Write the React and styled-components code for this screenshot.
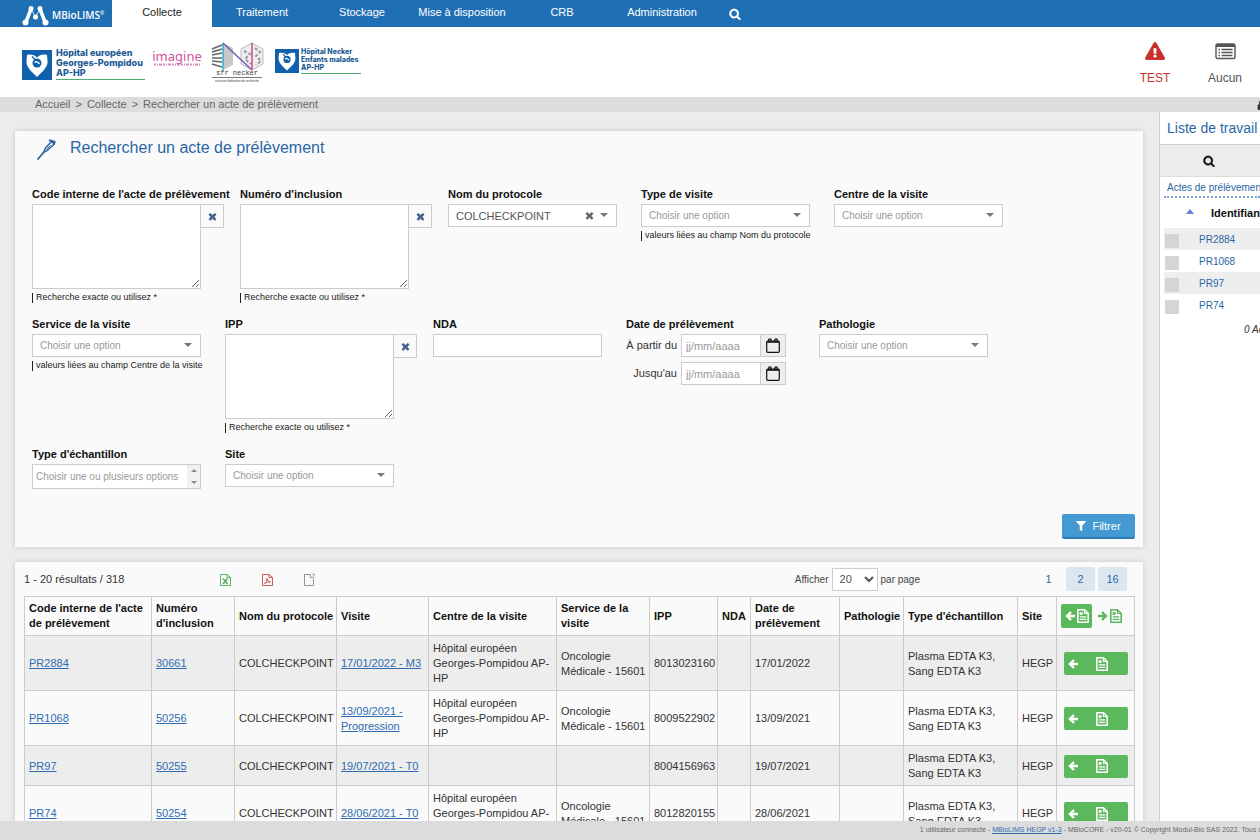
import React from 'react';
import styled, { createGlobalStyle, css } from 'styled-components';
import { FaFilter, FaExclamationTriangle, FaLock } from 'react-icons/fa';

const GlobalStyle = createGlobalStyle`
  * {
    box-sizing: border-box;
  }
  body {
    margin: 0;
    background: #ececec;
    color: #333;
    font-family: 'Liberation Sans', Arial, sans-serif;
    font-size: 11px;
    line-height: 15px;
  }
  button, input, select, textarea {
    font-family: inherit;
    font-size: 11px;
    margin: 0;
  }
  svg {
    display: block;
    flex-shrink: 0;
  }
`;

// Page frame
const Page = styled.div`
  display: flex;
  flex-direction: column;
  height: 100vh;
  overflow: hidden;
`;

const NavBar = styled.nav`
  display: flex;
  align-items: stretch;
  flex-shrink: 0;
  height: 27px;
  background: #1f6fb5;
`;

const Brand = styled.a`
  display: flex;
  align-items: center;
  gap: 3px;
  width: 112px;
  padding: 3px 0 0 22px;
  color: #fff;
  font-family: 'Open Sans', sans-serif;
  font-size: 10px;
  font-weight: 600;
  text-decoration: none;
`;

const BrandMark = styled.sup`
  font-size: 5px;
  line-height: 5px;
`;

const NavLink = styled.a`
  width: 100px;
  padding-top: 5px;
  text-align: center;
  text-decoration: none;
  color: ${(props) => (props.$active ? '#222' : '#fff')};
  background: ${(props) => (props.$active ? '#fff' : 'transparent')};
`;

const NavSearch = styled.button`
  display: flex;
  align-items: center;
  justify-content: center;
  width: 46px;
  padding: 0;
  border: none;
  background: none;
  color: #fff;
  cursor: pointer;
`;

const LogoBar = styled.header`
  display: flex;
  flex-shrink: 0;
  height: 70px;
  padding-left: 22px;
  background: #fff;
`;

const HospitalLogo = styled.div`
  display: flex;
  align-items: flex-start;
  gap: ${(props) => (props.$small ? '2px' : '4px')};
  margin-top: ${(props) => (props.$small ? '22px' : '23px')};
`;

const HospitalName = styled.div`
  min-width: ${(props) => (props.$small ? '60px' : '89px')};
  color: #1d5c96;
  border-bottom: 1px solid #4fae72;
  font-family: Inter, sans-serif;
  font-weight: 800;
  font-size: ${(props) => (props.$small ? '7px' : '9px')};
  line-height: ${(props) => (props.$small ? '8px' : '10px')};
  padding-bottom: 1px;
  margin-top: ${(props) => (props.$small ? '-1px' : '-2px')};
  white-space: nowrap;
`;

const ImagineLogo = styled.div`
  display: flex;
  flex-direction: column;
  align-items: center;
  width: 48px;
  margin: 22px 10px 0 8px;
  color: #d0509c;
  font-family: 'Noto Sans', sans-serif;
  font-size: 13px;
  line-height: 14px;
`;

const NeckerLogo = styled.div`
  margin: 15px 11px 0 0;
`;

const Shortcuts = styled.div`
  display: flex;
  margin-left: auto;
`;

const Shortcut = styled.a`
  display: flex;
  flex-direction: column;
  align-items: center;
  width: 70px;
  padding-top: 14px;
  gap: 10px;
  font-size: 12px;
  text-decoration: none;
  color: ${(props) => (props.$alert ? '#c9302c' : '#555')};
`;

const Breadcrumb = styled.div`
  display: flex;
  align-items: center;
  gap: 5px;
  flex-shrink: 0;
  height: 15px;
  padding-left: 35px;
  background: #dcdcdc;
  color: #666;
  overflow: hidden;
`;

const Crumb = styled.a`
  color: #666;
  text-decoration: none;
`;

const LockSlot = styled.span`
  margin: 0 -7px 0 auto;
  color: #333;
`;

const Main = styled.main`
  display: flex;
  flex: 1;
  min-height: 0;
  overflow: hidden;
`;

const Content = styled.div`
  display: flex;
  flex-direction: column;
  flex: 1;
  gap: 15px;
  min-width: 0;
  padding: 19px 16px 0 15px;
`;

const Panel = styled.section`
  flex-shrink: 0;
  background: #fafafa;
  box-shadow: 0 0 5px rgba(0, 0, 0, 0.16);
`;

// Search form
const SearchForm = styled.form`
  display: flex;
  flex-direction: column;
  padding: 0 8px 8px 17px;
`;

const PanelTitle = styled.h1`
  display: flex;
  align-items: flex-start;
  gap: 13px;
  height: 56px;
  margin: 0;
  padding: 7px 0 0 4px;
  color: #2a66a5;
  font-size: 16px;
  font-weight: normal;
  line-height: 20px;
`;

const Fields = styled.div`
  display: flex;
  flex-direction: column;
  gap: 12px;
`;

const FieldRow = styled.div`
  display: flex;
`;

const Field = styled.div`
  width: ${(props) => (props.$wide ? '208px' : '193px')};
`;

const Label = styled.label`
  display: block;
  margin-bottom: 2px;
  color: #111;
  font-weight: bold;
  white-space: nowrap;
`;

const Hint = styled.div`
  display: flex;
  align-items: center;
  gap: 3px;
  margin-top: 1px;
  color: #222;
  font-size: 9px;
  white-space: nowrap;
  &::before {
    content: '';
    width: 1px;
    height: 10px;
    background: #222;
  }
`;

const InputGroup = styled.div`
  display: flex;
  align-items: flex-start;
`;

const CodeArea = styled.textarea`
  display: block;
  width: 169px;
  height: 85px;
  border: 1px solid #ccc;
  background: #fff;
  resize: both;
  &:focus {
    outline: none;
    border-color: #66afe9;
  }
`;

const ClearArea = styled.button`
  display: flex;
  align-items: center;
  justify-content: center;
  width: 23px;
  height: 24px;
  padding: 0;
  border: 1px solid #ccc;
  border-left: none;
  background: #fafafa;
  color: #43618f;
  cursor: pointer;
`;

const TextInput = styled.input`
  display: block;
  width: 169px;
  height: 23px;
  border: 1px solid #ccc;
  background: #fff;
`;

const SelectBox = styled.div`
  position: relative;
  width: 169px;
`;

const Select = styled.select`
  display: block;
  width: 100%;
  height: ${(props) => (props.$multi ? '25px' : '23px')};
  padding: ${(props) => (props.$multi ? '0 3px' : '0 7px')};
  border: 1px solid #ccc;
  border-radius: 0;
  background: #fff;
  appearance: none;
  color: ${(props) => (props.$filled ? '#555' : '#999')};
  font-size: ${(props) => (props.$filled ? '11px' : '10px')};
`;

const Caret = styled.span`
  position: absolute;
  top: 9px;
  right: 9px;
  border: 4px solid transparent;
  border-top-color: #777;
  border-bottom: none;
  pointer-events: none;
`;

const ClearChoice = styled.button`
  position: absolute;
  top: 6px;
  right: 22px;
  padding: 0;
  border: none;
  background: none;
  color: #666;
  cursor: pointer;
`;

const ScrollArrows = styled.span`
  position: absolute;
  top: 1px;
  right: 1px;
  bottom: 1px;
  display: flex;
  flex-direction: column;
  align-items: center;
  justify-content: space-around;
  width: 13px;
  background: #f1f1f1;
  pointer-events: none;
`;

const ScrollArrow = styled.i`
  border: 3px solid transparent;
  ${(props) =>
    props.$up
      ? css`
          border-top: none;
          border-bottom-color: #888;
        `
      : css`
          border-bottom: none;
          border-top-color: #888;
        `}
`;

const DateLine = styled.div`
  display: flex;
  align-items: center;
  width: 160px;
  margin-bottom: 5px;
`;

const DateLabel = styled.label`
  flex: 1;
  margin-right: 4px;
  text-align: right;
  white-space: nowrap;
`;

const DateInput = styled.input`
  width: 80px;
  height: 23px;
  padding: 0 4px;
  border: 1px solid #ccc;
  background: #fff;
  &::placeholder {
    color: #999;
  }
`;

const DateButton = styled.button`
  display: flex;
  align-items: center;
  justify-content: center;
  width: 25px;
  height: 23px;
  padding: 0;
  border: 1px solid #ccc;
  border-left: none;
  background: #eee;
  color: #111;
`;

const FilterButton = styled.button`
  display: flex;
  align-items: center;
  justify-content: center;
  gap: 6px;
  align-self: flex-end;
  width: 73px;
  height: 25px;
  margin-top: 25px;
  padding: 0;
  border: none;
  border-bottom: 2px solid #2d7cb8;
  border-radius: 2px;
  background: #4499d2;
  color: #fff;
  cursor: pointer;
  &:hover {
    background: #3989c0;
  }
`;

// Results
const Results = styled.div`
  padding: 0 9px;
`;

const ResultsBar = styled.div`
  display: flex;
  align-items: center;
  height: 34px;
`;

const ResultsCount = styled.div`
  width: 196px;
`;

const Exports = styled.div`
  display: flex;
  gap: 31px;
`;

const ExportButton = styled.button`
  padding: 0;
  border: none;
  background: none;
  cursor: pointer;
  color: ${(props) => props.$color};
`;

const PageSize = styled.label`
  display: flex;
  align-items: center;
  gap: 3px;
  margin-left: auto;
  color: #444;
  font-size: 10px;
`;

const PageSizeSelect = styled.select`
  width: 46px;
  height: 23px;
  padding: 0 0 0 3px;
  border: 1px solid #ccc;
  background: #fff;
  color: #555;
`;

const Pager = styled.div`
  display: flex;
  gap: 3px;
  margin: 0 7px 0 114px;
`;

const PageLink = styled.a`
  width: 29px;
  height: 24px;
  border-radius: 2px;
  background: ${(props) => (props.$current ? 'transparent' : '#dce6f1')};
  color: #2a66a5;
  line-height: 24px;
  text-align: center;
  text-decoration: none;
`;

const Table = styled.table`
  width: 100%;
  border-collapse: collapse;
  table-layout: fixed;
`;

const Th = styled.th`
  padding: 4px 0 4px 4px;
  border: 1px solid #ccc;
  color: #111;
  text-align: left;
`;

const Td = styled.td`
  padding: 5px 0 4px 4px;
  border: 1px solid #ccc;
`;

const Tr = styled.tr`
  background: ${(props) => (props.$odd ? '#ededed' : '#fafafa')};
`;

const Link = styled.a`
  color: #2f6cb0;
  text-decoration: underline;
`;

const HeadActions = styled.div`
  display: flex;
  align-items: center;
  gap: 6px;
`;

const AddAll = styled.button`
  display: flex;
  align-items: center;
  justify-content: center;
  gap: 2px;
  width: 31px;
  height: 24px;
  padding: 0;
  border: none;
  border-radius: 2px;
  background: #5cb85c;
  color: #fff;
`;

const RemoveAll = styled.button`
  display: flex;
  align-items: center;
  gap: 2px;
  padding: 0;
  border: none;
  background: none;
  color: #5cb85c;
`;

const AddOne = styled.button`
  display: flex;
  align-items: center;
  justify-content: space-between;
  width: 64px;
  height: 23px;
  margin-left: 3px;
  padding: 0 20px 0 4px;
  border: none;
  border-radius: 2px;
  background: #5cb85c;
  color: #fff;
`;

// Work list
const Sidebar = styled.aside`
  flex-shrink: 0;
  width: 101px;
  border-left: 1px solid #ccc;
  background: #fff;
  overflow: hidden;
  white-space: nowrap;
`;

const SidebarTitle = styled.h2`
  height: 33px;
  margin: 0;
  padding-left: 7px;
  border-bottom: 1px solid #ccc;
  color: #2a66a5;
  font-size: 14px;
  font-weight: normal;
  line-height: 32px;
`;

const SidebarTools = styled.div`
  display: flex;
  align-items: center;
  height: 32px;
  padding-left: 43px;
  border-bottom: 1px solid #ddd;
  background: #ececec;
`;

const SidebarSearch = styled.button`
  padding: 0;
  border: none;
  background: none;
  color: #111;
`;

const SidebarTab = styled.a`
  display: block;
  height: 21px;
  margin-left: 4px;
  padding-left: 3px;
  border-bottom: 2px dotted #7ba0c9;
  color: #2a66a5;
  font-size: 10px;
  line-height: 21px;
  text-decoration: none;
`;

const WorkTable = styled.table`
  width: 160px;
  margin-left: 4px;
  border-collapse: collapse;
  table-layout: fixed;
`;

const WorkHead = styled.th`
  height: 30px;
  padding: 0 0 0 13px;
  color: #111;
  text-align: left;
`;

const SortArrow = styled.span`
  display: block;
  width: 0;
  margin: -4px 0 0 9px;
  border: 4px solid transparent;
  border-top: none;
  border-bottom: 5px solid #6a7fd0;
`;

const WorkRow = styled.tr`
  background: ${(props) => (props.$odd ? '#eee' : '#fff')};
`;

const WorkCell = styled.td`
  height: 22px;
  padding: 0 0 0 1px;
  font-size: 10px;
`;

const WorkLink = styled.a`
  color: #2a66a5;
  text-decoration: none;
`;

const WorkCheck = styled.input`
  display: block;
  width: 14px;
  height: 14px;
  margin-top: 4px;
  appearance: none;
  background: #d5d5d5;
`;

const WorkTotal = styled.p`
  margin: 4px 0 0 84px;
  font-size: 10px;
  font-style: italic;
  line-height: 20px;
`;

const Footer = styled.footer`
  flex-shrink: 0;
  height: 19px;
  padding-left: 73%;
  background: #dcdcdc;
  color: #666;
  font-size: 7px;
  line-height: 18px;
  white-space: nowrap;
  overflow: hidden;
`;

// Icons
const Glyph = ({ d, size }) => (
  <svg width={size} height={size} viewBox="0 0 1792 1792" fill="currentColor" stroke="currentColor" strokeWidth="50">
    <path d={d} />
  </svg>
);

const SearchIcon = () => (
  <Glyph
    size={12}
    d="M1216 832q0-185-131.5-316.5t-316.5-131.5-316.5 131.5-131.5 316.5 131.5 316.5 316.5 131.5 316.5-131.5 131.5-316.5zm512 832q0 52-38 90t-90 38q-54 0-90-38l-343-342q-179 124-399 124-143 0-273.5-55.5t-225-150-150-225-55.5-273.5 55.5-273.5 150-225 225-150 273.5-55.5 273.5 55.5 225 150 150 225 55.5 273.5q0 220-124 399l343 343q37 37 37 90z"
  />
);

const TimesIcon = () => (
  <Glyph
    size={11}
    d="M1490 1322q0 40-28 68l-136 136q-28 28-68 28t-68-28l-294-294-294 294q-28 28-68 28t-68-28l-136-136q-28-28-28-68t28-68l294-294-294-294q-28-28-28-68t28-68l136-136q28-28 68-28t68 28l294 294 294-294q28-28 68-28t68 28l136 136q28 28 28 68t-28 68l-294 294 294 294q28 28 28 68z"
  />
);

const ArrowIcon = ({ right }) => (
  <svg width="10" height="10" viewBox="0 0 10 10" fill="none" stroke="currentColor" strokeWidth="2.4">
    <path d={right ? 'M0 5h8M4 1l4 4-4 4' : 'M10 5H2M6 1L2 5l4 4'} />
  </svg>
);

const DocIcon = () => (
  <svg width="12" height="14" viewBox="0 0 12 14" fill="none" stroke="currentColor">
    <path strokeWidth="1.6" strokeLinejoin="round" d="M.8.8h6.700l3.700 3.700v8.700H.8z" />
    <path strokeWidth="1.200" d="M7.500 1v3.500H11" />
    <path strokeWidth="1.300" d="M2.800 7.800h6.400M2.800 10.400h6.400" />
    <path fill="currentColor" stroke="none" d="M2.600 3.200h3v2.600h-3z" />
  </svg>
);

const CalendarIcon = () => (
  <svg width="14" height="15" viewBox="0 0 14 15" fill="none" stroke="currentColor">
    <rect x=".7" y="3" width="12.6" height="11.3" rx="1" strokeWidth="1.2" />
    <path strokeWidth="1.6" d="M1 4h12" />
    <path strokeWidth="1.3" d="M2.700 4V2q0-1.200 1.200-1.200T5.100 2v2M8.900 4V2q0-1.200 1.200-1.200T11.300 2v2" />
  </svg>
);

const ListIcon = () => (
  <svg width="21" height="20" viewBox="0 0 21 20" fill="none" stroke="currentColor">
    <rect x="1" y="3" width="19" height="14.500" rx="1.500" strokeWidth="1.400" />
    <path strokeWidth="3" d="M1 4.500h19" />
    <path strokeWidth="1.300" d="M3.500 8.500h1.500M3.500 11.500h1.500M3.500 14.500h1.500M6.500 8.500h11M6.500 11.500h11M6.500 14.500h11" />
  </svg>
);

const ExportIcon = ({ kind }) => (
  <svg width="11" height="13" viewBox="0 0 11 13" fill="none" stroke="currentColor" strokeWidth=".9">
    {kind === 'blank' ? (
      <path d="M6.500 1.500h-6v11h9v-7M6.500 1.500v3h3M8.500 1h1.500v2.500" />
    ) : (
      <path d="M.5 1.500h6.500l3.500 3v8H.5zM7 1.500v3h3.500" />
    )}
    {kind === 'excel' && <path strokeWidth="1.500" d="M3 5.500l4.500 5.500M7.500 5.500L3 11" />}
    {kind === 'pdf' && <path d="M2.500 10.500Q5 9 5 5.500q.5 3 3.500 3.500-3-.5-6 1.500z" />}
  </svg>
);

const NeedleIcon = () => (
  <svg width="21" height="22" viewBox="0 0 21 22" fill="none" stroke="currentColor">
    <path strokeWidth="1.800" d="M1.500 21.500L8 14" />
    <path strokeWidth="1.500" d="M7.500 14.500L9.500 10l6-6.500 2.500 2.500-6.500 6.500z" />
    <path strokeWidth="1" d="M10.500 11.500l4-4" />
    <path strokeWidth="2" d="M13 2.200l6 1.800M18.800 3l-1 4" />
  </svg>
);

const MoleculeIcon = () => (
  <svg width="27" height="21" viewBox="0 0 27 21" fill="#fff">
    <path stroke="#fff" strokeWidth="3.500" d="M9 4L4 17M18 4l5 13" />
    <circle cx="9" cy="3.500" r="2.500" />
    <circle cx="18" cy="3.500" r="2.500" />
    <circle cx="3.500" cy="17.500" r="3" />
    <circle cx="23.500" cy="17.500" r="3" />
    <circle cx="13.500" cy="12" r="2.500" />
    <path stroke="#fff" strokeWidth=".8" fill="none" d="M9 4l4.500 8L18 4" />
  </svg>
);

const HeartLogo = ({ size }) => (
  <svg width={size} height={size} viewBox="0 0 30 30">
    <path fill="#1061ad" d="M0 0h30v30H0z" />
    <path fill="#fff" d="M15 27C9 21 4 17 4.500 11c0-2 .5-4 .5-6 4-1 7.500 0 10 2.500C17.500 5 21 4 25 5c0 2 .5 4 .5 6C26 17 21 21 15 27z" />
    <circle cx="15" cy="13" r="4.500" fill="#1061ad" />
    <path d="M10 6.500l4 4" stroke="#1061ad" strokeWidth="1.500" />
    <path d="M12.500 12.500q2.500-2 5 1.500" stroke="#fff" strokeWidth="1.400" fill="none" />
  </svg>
);

const NeckerDrawing = () => (
  <svg width="53" height="42" viewBox="0 0 53 42" fill="none">
    <path fill="#c8c8c8" d="M12 1l10 5v17l-10 5z" />
    <path stroke="#666" strokeWidth="1.500" d="M1 7l10-4M1 10l10-3M1 13l10-2M1 16h10M1 19l10 1M1 22l10 3" />
    <path fill="#eee" stroke="#bbb" d="M41 1l11 6v15l-11 6-11-6V7z" />
    <path stroke="#999" strokeWidth="2" strokeDasharray="3 2" d="M33 9l6 3-5 5 6 5M44 6l5 4-4 4 5 5-5 4" />
    <path stroke="#2fb1d2" strokeWidth="1.500" d="M12 1v27" />
    <path stroke="#7557b5" strokeWidth="1.500" d="M12 1l29 27" />
    <path stroke="#cf4a91" strokeWidth="1.500" d="M41 1v27" />
    <text x="5" y="33" fill="#333" fontSize="7" fontFamily="Liberation Mono, monospace">sfr necker</text>
    <path stroke="#777" d="M1 35.500h50" />
    <text x="4" y="40" fill="#333" fontSize="3" fontFamily="Liberation Sans, sans-serif">structure fédérative de recherche</text>
  </svg>
);

// Data
const navItems = ['Collecte', 'Traitement', 'Stockage', 'Mise à disposition', 'CRB', 'Administration'];

const columns = [
  { label: "Code interne de l'acte de prélèvement", width: 127 },
  { label: "Numéro d'inclusion", width: 83 },
  { label: 'Nom du protocole', width: 102 },
  { label: 'Visite', width: 92 },
  { label: 'Centre de la visite', width: 128 },
  { label: 'Service de la visite', width: 93 },
  { label: 'IPP', width: 68 },
  { label: 'NDA', width: 33 },
  { label: 'Date de prélèvement', width: 89 },
  { label: 'Pathologie', width: 64 },
  { label: "Type d'échantillon", width: 114 },
  { label: 'Site', width: 39 },
];

const hegp = 'Hôpital européen Georges-Pompidou AP-HP';
const onco = 'Oncologie Médicale - 15601';

const rows = [
  { code: 'PR2884', num: '30661', visit: '17/01/2022 - M3', centre: hegp, service: onco, ipp: '8013023160', date: '17/01/2022' },
  { code: 'PR1068', num: '50256', visit: '13/09/2021 - Progression', centre: hegp, service: onco, ipp: '8009522902', date: '13/09/2021' },
  { code: 'PR97', num: '50255', visit: '19/07/2021 - T0', centre: '', service: '', ipp: '8004156963', date: '19/07/2021' },
  { code: 'PR74', num: '50254', visit: '28/06/2021 - T0', centre: hegp, service: onco, ipp: '8012820155', date: '28/06/2021' },
];

const AreaField = ({ id, label }) => (
  <Field $wide>
    <Label htmlFor={id}>{label}</Label>
    <InputGroup>
      <CodeArea id={id} />
      <ClearArea type="button" aria-label="Effacer">
        <TimesIcon />
      </ClearArea>
    </InputGroup>
    <Hint>Recherche exacte ou utilisez *</Hint>
  </Field>
);

const SelectField = ({ id, label, value, hint }) => (
  <Field>
    <Label htmlFor={id}>{label}</Label>
    <SelectBox>
      <Select id={id} $filled={Boolean(value)}>
        <option>{value || 'Choisir une option'}</option>
      </Select>
      {value && (
        <ClearChoice type="button" aria-label="Effacer">
          <TimesIcon />
        </ClearChoice>
      )}
      <Caret />
    </SelectBox>
    {hint && <Hint>{hint}</Hint>}
  </Field>
);

const DateField = ({ id, label }) => (
  <DateLine>
    <DateLabel htmlFor={id}>{label}</DateLabel>
    <DateInput id={id} placeholder="jj/mm/aaaa" />
    <DateButton type="button" aria-label="Calendrier">
      <CalendarIcon />
    </DateButton>
  </DateLine>
);

const SearchPanel = () => (
  <Panel>
    <SearchForm onSubmit={(e) => e.preventDefault()}>
      <PanelTitle>
        <NeedleIcon />
        Rechercher un acte de prélèvement
      </PanelTitle>
      <Fields>
        <FieldRow>
          <AreaField id="code" label="Code interne de l'acte de prélèvement" />
          <AreaField id="inclusion" label="Numéro d'inclusion" />
          <SelectField id="protocole" label="Nom du protocole" value="COLCHECKPOINT" />
          <SelectField id="typeVisite" label="Type de visite" hint="valeurs liées au champ Nom du protocole" />
          <SelectField id="centre" label="Centre de la visite" />
        </FieldRow>
        <FieldRow>
          <SelectField id="service" label="Service de la visite" hint="valeurs liées au champ Centre de la visite" />
          <AreaField id="ipp" label="IPP" />
          <Field>
            <Label htmlFor="nda">NDA</Label>
            <TextInput id="nda" />
          </Field>
          <Field>
            <Label as="div">Date de prélèvement</Label>
            <DateField id="dateFrom" label="À partir du" />
            <DateField id="dateTo" label="Jusqu'au" />
          </Field>
          <SelectField id="pathologie" label="Pathologie" />
        </FieldRow>
        <FieldRow>
          <Field>
            <Label htmlFor="typeEch">Type d'échantillon</Label>
            <SelectBox>
              <Select id="typeEch" $multi>
                <option>Choisir une ou plusieurs options</option>
              </Select>
              <ScrollArrows>
                <ScrollArrow $up />
                <ScrollArrow />
              </ScrollArrows>
            </SelectBox>
          </Field>
          <SelectField id="site" label="Site" />
        </FieldRow>
      </Fields>
      <FilterButton type="submit">
        <FaFilter size={10} />
        Filtrer
      </FilterButton>
    </SearchForm>
  </Panel>
);

const ResultsPanel = () => (
  <Panel>
    <Results>
      <ResultsBar>
        <ResultsCount>1 - 20 résultats / 318</ResultsCount>
        <Exports>
          <ExportButton $color="#4fae57" aria-label="Excel"><ExportIcon kind="excel" /></ExportButton>
          <ExportButton $color="#cc4b48" aria-label="PDF"><ExportIcon kind="pdf" /></ExportButton>
          <ExportButton $color="#888" aria-label="Exporter"><ExportIcon kind="blank" /></ExportButton>
        </Exports>
        <PageSize>
          Afficher
          <PageSizeSelect>
            <option>20</option>
          </PageSizeSelect>
          par page
        </PageSize>
        <Pager>
          <PageLink href="#" $current>1</PageLink>
          <PageLink href="#">2</PageLink>
          <PageLink href="#">16</PageLink>
        </Pager>
      </ResultsBar>
      <Table>
        <colgroup>
          {columns.map((col) => (
            <col key={col.label} width={col.width} />
          ))}
          <col width={78} />
        </colgroup>
        <thead>
          <tr>
            {columns.map((col) => (
              <Th key={col.label}>{col.label}</Th>
            ))}
            <Th>
              <HeadActions>
                <AddAll aria-label="Tout ajouter"><ArrowIcon /><DocIcon /></AddAll>
                <RemoveAll aria-label="Tout retirer"><ArrowIcon right /><DocIcon /></RemoveAll>
              </HeadActions>
            </Th>
          </tr>
        </thead>
        <tbody>
          {rows.map((row, i) => (
            <Tr key={row.code} $odd={i % 2 === 0}>
              <Td><Link href="#">{row.code}</Link></Td>
              <Td><Link href="#">{row.num}</Link></Td>
              <Td>COLCHECKPOINT</Td>
              <Td><Link href="#">{row.visit}</Link></Td>
              <Td>{row.centre}</Td>
              <Td>{row.service}</Td>
              <Td>{row.ipp}</Td>
              <Td />
              <Td>{row.date}</Td>
              <Td />
              <Td>Plasma EDTA K3, Sang EDTA K3</Td>
              <Td>HEGP</Td>
              <Td>
                <AddOne aria-label="Ajouter"><ArrowIcon /><DocIcon /></AddOne>
              </Td>
            </Tr>
          ))}
        </tbody>
      </Table>
    </Results>
  </Panel>
);

const WorkList = () => (
  <Sidebar>
    <SidebarTitle>Liste de travail</SidebarTitle>
    <SidebarTools>
      <SidebarSearch aria-label="Rechercher"><SearchIcon /></SidebarSearch>
    </SidebarTools>
    <SidebarTab href="#">Actes de prélèvement</SidebarTab>
    <WorkTable>
      <colgroup>
        <col width={34} />
        <col />
      </colgroup>
      <thead>
        <tr>
          <WorkHead><SortArrow /></WorkHead>
          <WorkHead>Identifiant</WorkHead>
        </tr>
      </thead>
      <tbody>
        {rows.map((row, i) => (
          <WorkRow key={row.code} $odd={i % 2 === 0}>
            <WorkCell><WorkCheck type="checkbox" aria-label={row.code} /></WorkCell>
            <WorkCell><WorkLink href="#">{row.code}</WorkLink></WorkCell>
          </WorkRow>
        ))}
      </tbody>
    </WorkTable>
    <WorkTotal>0 Actes</WorkTotal>
  </Sidebar>
);

const App = () => {
  return (
    <Page>
      <GlobalStyle />
      <NavBar>
        <Brand href="#">
          <MoleculeIcon />
          <span>MBioLIMS<BrandMark>®</BrandMark></span>
        </Brand>
        {navItems.map((item, i) => (
          <NavLink key={item} href="#" $active={i === 0}>{item}</NavLink>
        ))}
        <NavSearch aria-label="Rechercher"><SearchIcon /></NavSearch>
      </NavBar>
      <LogoBar>
        <HospitalLogo>
          <HeartLogo size={30} />
          <HospitalName>Hôpital européen<br />Georges-Pompidou<br />AP-HP</HospitalName>
        </HospitalLogo>
        <ImagineLogo>
          imagine
          <svg width="46" height="3" viewBox="0 0 46 3">
            <path d="M0 1.500h46" stroke="#d98bb9" strokeWidth="2" strokeDasharray="2 1 1 1 3 1" />
          </svg>
        </ImagineLogo>
        <NeckerLogo><NeckerDrawing /></NeckerLogo>
        <HospitalLogo $small>
          <HeartLogo size={24} />
          <HospitalName $small>Hôpital Necker<br />Enfants malades<br />AP-HP</HospitalName>
        </HospitalLogo>
        <Shortcuts>
          <Shortcut href="#" $alert>
            <FaExclamationTriangle size={20} />
            TEST
          </Shortcut>
          <Shortcut href="#">
            <ListIcon />
            Aucun
          </Shortcut>
        </Shortcuts>
      </LogoBar>
      <Breadcrumb>
        <Crumb href="#">Accueil</Crumb>
        <span>&gt;</span>
        <Crumb href="#">Collecte</Crumb>
        <span>&gt;</span>
        <span>Rechercher un acte de prélèvement</span>
        <LockSlot><FaLock size={10} /></LockSlot>
      </Breadcrumb>
      <Main>
        <Content>
          <SearchPanel />
          <ResultsPanel />
        </Content>
        <WorkList />
      </Main>
      <Footer>
        1 utilisateur connecté - <Link href="#">MBioLIMS HEGP v1-3</Link> - MBioCORE - v20-01 © Copyright Modul-Bio SAS 2022. Tous droits réservés
      </Footer>
    </Page>
  );
};

export default App;
